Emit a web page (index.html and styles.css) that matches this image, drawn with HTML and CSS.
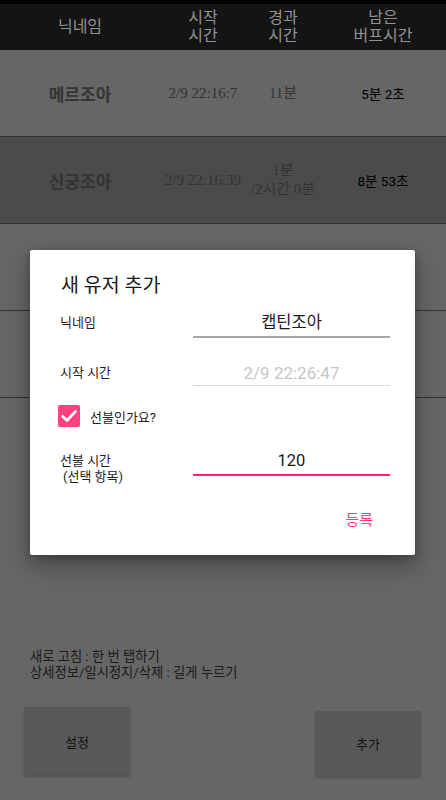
FILE: index.html
```html
<!DOCTYPE html>
<html lang="ko">
<head>
<meta charset="utf-8">
<title>버프 타이머</title>
<link rel="stylesheet" href="styles.css">
</head>
<body>
<div class="screen">
  <header class="thead">
    <div class="th">닉네임</div>
    <div class="th">시작<br>시간</div>
    <div class="th">경과<br>시간</div>
    <div class="th">남은<br>버프시간</div>
  </header>
  <div class="list">
    <div class="row">
      <div class="name">메르조아</div>
      <div class="start">2/9 22:16:7</div>
      <div class="elapsed">11분</div>
      <div class="remain">5분 2초</div>
    </div>
    <div class="row row-paused">
      <div class="name">신궁조아</div>
      <div class="start">2/9 22:16:39</div>
      <div class="elapsed">1분<br>/2시간 0분</div>
      <div class="remain">8분 53초</div>
    </div>
    <div class="row"></div>
    <div class="row"></div>
  </div>
  <footer class="footer">
    <p class="help">새로 고침 : 한 번 탭하기<br>상세정보/일시정지/삭제 : 길게 누르기</p>
    <div class="actions">
      <button class="btn btn-settings">설정</button>
      <button class="btn btn-add">추가</button>
    </div>
  </footer>
</div>

<div class="dialog">
  <h2 class="dialog-title">새 유저 추가</h2>
  <div class="field-row row-nick">
    <div class="label">닉네임</div>
    <div class="field field-nick">캡틴조아</div>
  </div>
  <div class="field-row row-start">
    <div class="label">시작 시간</div>
    <div class="field field-start">2/9 22:26:47</div>
  </div>
  <div class="check-row">
    <span class="checkbox">
      <svg width="22" height="22" viewBox="0 0 22 22"><path d="M4.5 11.2 L9 15.5 L17.5 6.5" fill="none" stroke="#fff" stroke-width="2.6" stroke-linecap="round" stroke-linejoin="round"/></svg>
    </span>
    <span class="check-label">선불인가요?</span>
  </div>
  <div class="field-row row-prepaid">
    <div class="label label-two">선불 시간<br><span class="sub">(선택 항목)</span></div>
    <div class="field field-prepaid">120</div>
  </div>
  <div class="dialog-actions">
    <button class="text-btn">등록</button>
  </div>
</div>
</body>
</html>
```

FILE: styles.css
```css
* { box-sizing: border-box; }

html, body {
  margin: 0;
  padding: 0;
}

body {
  width: 446px;
  height: 800px;
  background: #666666;
  font-family: Roboto, "Noto Sans CJK KR", sans-serif;
  position: relative;
  overflow: hidden;
}

.screen {
  display: flex;
  flex-direction: column;
  height: 800px;
}

.thead,
.row {
  display: grid;
  grid-template-columns: 160px 86px 74px 126px;
  align-items: center;
  text-align: center;
}

.thead {
  height: 50px;
  border-top: 4px solid #020202;
  background: #141414;
  color: #939393;
  font-size: 16px;
  line-height: 18px;
}

.row {
  height: 87px;
  border-bottom: 1px solid #333333;
  background: #666666;
}

.row-paused {
  background: #4b4b4b;
}

.name {
  font-size: 17px;
  font-weight: bold;
  color: #333333;
}

.start,
.elapsed {
  font-family: "Liberation Serif", "Noto Sans CJK KR", serif;
  font-size: 15px;
  line-height: 19px;
  color: #333333;
}

.remain {
  font-size: 13.5px;
  color: #000000;
}

.footer {
  margin-top: auto;
}

.help {
  margin: 0 0 26px 30px;
  font-size: 13.3px;
  line-height: 16px;
  color: #1a1a1a;
}

.actions {
  display: flex;
  justify-content: space-between;
  align-items: flex-end;
  padding: 0 25px 24px 24px;
}

.btn {
  width: 106px;
  border: none;
  border-radius: 2px;
  background: #585858;
  box-shadow: 0 2px 3px rgba(0, 0, 0, 0.22);
  font-family: Roboto, "Noto Sans CJK KR", sans-serif;
  font-size: 13px;
  color: #111111;
  padding: 0;
}

.btn-settings {
  height: 68px;
  margin-bottom: 1px;
}

.btn-add {
  height: 65px;
}

/* dialog */
.dialog {
  position: absolute;
  left: 30px;
  top: 250px;
  width: 385px;
  height: 305px;
  padding: 24px 25px 0 30px;
  background: #ffffff;
  border-radius: 2px;
  box-shadow: 0 10px 24px rgba(0, 0, 0, 0.35), 0 2px 6px rgba(0, 0, 0, 0.2);
}

.dialog-title {
  margin: 0;
  padding-left: 1px;
  font-size: 19.5px;
  font-weight: normal;
  line-height: 24px;
  color: #1a1a1a;
}

.field-row {
  display: flex;
  align-items: flex-start;
}

.label {
  width: 133px;
  font-size: 13px;
  line-height: 24px;
  color: #1e1e1e;
}

.label-two {
  padding-top: 4px;
  line-height: 16px;
}

.label-two .sub {
  padding-left: 3px;
}

.field {
  width: 197px;
  text-align: center;
  font-size: 16.5px;
  line-height: 24px;
  color: #1a1a1a;
}

.row-nick { margin-top: 13px; }
.field-nick {
  padding-bottom: 1px;
  border-bottom: 2px solid #a6a6a6;
}

.row-start { margin-top: 23px; }
.field-start {
  font-size: 17px;
  color: #c6c6c6;
  border-bottom: 1px solid #d9d9d9;
}

.check-row {
  display: flex;
  align-items: center;
  margin-top: 19px;
  height: 22px;
}

.checkbox {
  display: block;
  width: 22px;
  height: 22px;
  margin-left: -2px;
  border-radius: 2px;
  background: #ff4081;
}

.checkbox svg { display: block; }

.check-label {
  margin-left: 10px;
  font-size: 13px;
  color: #1e1e1e;
}

.row-prepaid { margin-top: 22px; }
.field-prepaid {
  padding-bottom: 1px;
  border-bottom: 2px solid #ff1f75;
}

.dialog-actions {
  display: flex;
  justify-content: flex-end;
  margin-top: 25px;
  padding-right: 17px;
}

.text-btn {
  border: none;
  background: none;
  padding: 0;
  font-family: Roboto, "Noto Sans CJK KR", sans-serif;
  font-size: 15px;
  line-height: 20px;
  color: #ff3d7f;
}
```
